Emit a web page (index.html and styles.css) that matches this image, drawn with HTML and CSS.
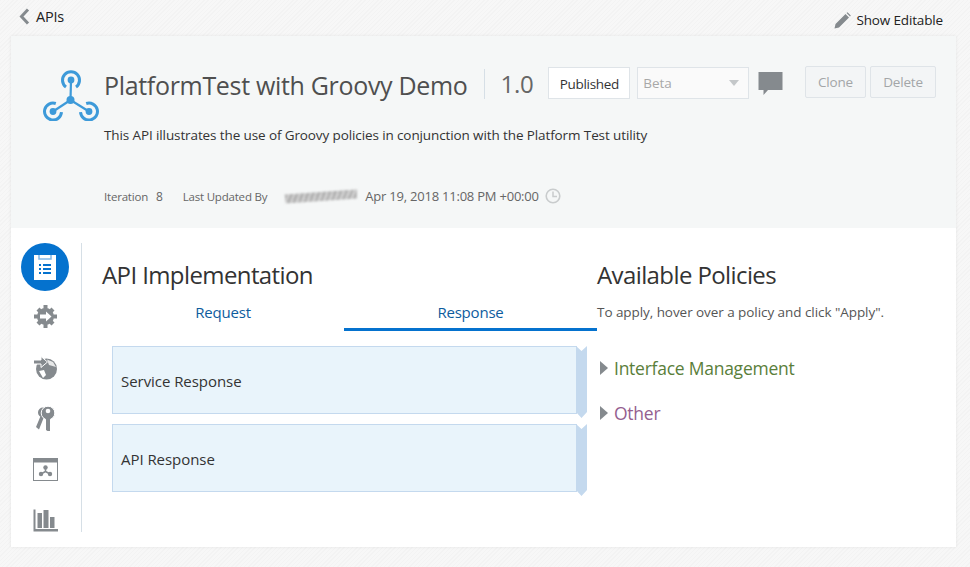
FILE: index.html
```html
<!DOCTYPE html>
<html>
<head>
  <title>PlatformTest with Groovy Demo</title>
  <meta name="viewport" content="width=device-width, initial-scale=1">
  <link rel="stylesheet" href="styles.css">
</head>
<body>
  <div class="topbar">
    <a class="back">
      <svg class="back-icon" width="11" height="17" viewBox="0 0 11 17"><path d="M9 1.500 L2.500 8.500 L9 15.500" fill="none" stroke="#858a8e" stroke-width="3"/></svg>
      APIs
    </a>
    <a class="editable">
      <svg width="17" height="17" viewBox="0 0 17 17"><path d="M0.500 16.500 L1.500 12 L11.500 2 L15 5.500 L5 15.500 Z M12.500 1 L13.500 0.200 L16.800 3.500 L16 4.500 Z" fill="#858a8e"/></svg>
      Show Editable
    </a>
  </div>

  <div class="card">
    <div class="header">
      <div class="title-row">
        <svg class="api-logo" width="58" height="52" viewBox="0 0 58 52">
          <g fill="none" stroke="#3d9ad9" stroke-width="3">
            <path d="M24 18 A8.500 8.500 0 1 1 34 18"/>
            <path d="M13.800 34.500 A8.500 8.500 0 1 0 19.500 43.200"/>
            <path d="M44.200 34.500 A8.500 8.500 0 1 1 38.500 43.200"/>
          </g>
          <g stroke="#3d9ad9" stroke-width="2.200">
            <line x1="29" y1="11" x2="28.500" y2="31"/>
            <line x1="28.500" y1="31" x2="11" y2="42.500"/>
            <line x1="28.500" y1="31" x2="47" y2="42.500"/>
          </g>
          <g fill="#3d9ad9">
            <circle cx="29" cy="11" r="3.400"/>
            <circle cx="28.500" cy="31" r="4"/>
            <circle cx="11" cy="42.500" r="3.400"/>
            <circle cx="47" cy="42.500" r="3.400"/>
          </g>
        </svg>
        <h1 class="api-name">PlatformTest with Groovy Demo</h1>
        <span class="version">1.0</span>
        <span class="state">Published</span>
        <span class="select">Beta<i class="caret"></i></span>
        <svg class="comment" width="25" height="25" viewBox="0 0 25 25"><path d="M0.500 1 H24.500 V19 H10 L5.500 24 V19 H0.500 Z" fill="#858a8e"/></svg>
        <div class="actions">
          <button>Clone</button>
          <button>Delete</button>
        </div>
      </div>
      <p class="description">This API illustrates the use of Groovy policies in conjunction with the Platform Test utility</p>
      <div class="meta">
        <span>Iteration</span>
        <span class="iter">8</span>
        <span class="updated">Last Updated By</span>
        <span class="redacted"></span>
        <span class="date">Apr 19, 2018 11:08 PM +00:00</span>
        <svg width="16" height="16" viewBox="0 0 16 16"><circle cx="8" cy="8" r="6.800" fill="none" stroke="#c9cccd" stroke-width="1.600"/><path d="M8 3.500 V8.500 H12" fill="none" stroke="#c9cccd" stroke-width="1.500"/></svg>
      </div>
    </div>

    <div class="content">
      <nav class="sidenav">
        <a class="nav-item active">
          <svg width="24" height="28" viewBox="0 0 24 28"><path d="M1 2 H23 V27 H1 Z" fill="#fff"/><path d="M6 2 V6 H18 V2" fill="none" stroke="#0572ce" stroke-width="1.500" opacity=".5"/><g fill="#0572ce"><rect x="6" y="11" width="2" height="2"/><rect x="10" y="11" width="8" height="2"/><rect x="6" y="15" width="2" height="2"/><rect x="10" y="15" width="8" height="2"/><rect x="6" y="19" width="2" height="2"/><rect x="10" y="19" width="8" height="2"/></g></svg>
        </a>
        <a class="nav-item">
          <svg width="25" height="25" viewBox="0 0 25 25"><circle cx="12.500" cy="12.500" r="8.500" fill="#858a8e"/><path d="M10.500 1 H14.500 V5 H10.500 Z M10.500 20 H14.500 V24 H10.500 Z M1 10.500 H5 V14.500 H1 Z M20 10.500 H24 V14.500 H20 Z M3.500 6.500 L6.500 3.500 L9 6 L6 9 Z M18.500 3.500 L21.500 6.500 L19 9 L16 6 Z M3.500 18.500 L6 16 L9 19 L6.500 21.500 Z M19 16 L21.500 18.500 L18.500 21.500 L16 19 Z" fill="#858a8e"/><path d="M7 10.500 H13 V7.500 L18.500 12.500 L13 17.500 V14.500 H7 Z" fill="#fff"/></svg>
        </a>
        <a class="nav-item">
          <svg width="25" height="25" viewBox="0 0 25 25"><circle cx="13.500" cy="14" r="10.500" fill="#858a8e"/><path d="M14 4.500 L20 7 L23 12 L16 10 Z" fill="#fff" opacity=".8"/><path d="M6 16 L11 15 L13 20 L10 23 Z" fill="#fff"/><path d="M0.500 5 H8 V1.500 L14.500 7 L8 12.500 V9 H0.500 Z" fill="#858a8e" stroke="#fff" stroke-width="1"/></svg>
        </a>
        <a class="nav-item">
          <svg width="22" height="26" viewBox="0 0 22 26"><circle cx="9" cy="6.500" r="5" fill="#858a8e"/><path d="M7 9 L2 21 L5 23.500 L10 11 Z" fill="#858a8e"/><circle cx="14" cy="7" r="6.800" fill="#858a8e" stroke="#fff" stroke-width="1"/><circle cx="14" cy="5" r="2.300" fill="#fff"/><path d="M12 13 H16 V25 H13.500 L12 24 Z" fill="#858a8e"/></svg>
        </a>
        <a class="nav-item">
          <svg width="25" height="23" viewBox="0 0 25 23"><rect x="0.500" y="0.500" width="24" height="22" fill="#fff" stroke="#858a8e"/><rect x="0.500" y="0.500" width="24" height="4" fill="#858a8e"/><g fill="#858a8e"><circle cx="12.500" cy="9.500" r="2.200"/><circle cx="8" cy="16" r="2.200"/><circle cx="17" cy="16" r="2.200"/></g><path d="M12.500 9.500 V13.500 L8 16 M12.500 13.500 L17 16" fill="none" stroke="#858a8e" stroke-width="1.500"/></svg>
        </a>
        <a class="nav-item">
          <svg width="25" height="23" viewBox="0 0 25 23"><path d="M0.500 0.500 H2.500 V20 H25 V22.500 H0.500 Z" fill="#858a8e"/><g fill="#858a8e"><rect x="4.500" y="4" width="4.500" height="15"/><rect x="10.500" y="1" width="5" height="18"/><rect x="17" y="8" width="4.500" height="11"/></g></svg>
        </a>
      </nav>

      <section class="implementation">
        <h2>API Implementation</h2>
        <div class="tabs">
          <a class="tab">Request</a>
          <a class="tab selected">Response</a>
        </div>
        <div class="flow">
          <div class="flow-box">Service Response</div>
          <div class="flow-box">API Response</div>
        </div>
      </section>

      <section class="policies">
        <h2>Available Policies</h2>
        <p class="hint">To apply, hover over a policy and click "Apply".</p>
        <div class="group green"><i class="arrow"></i>Interface Management</div>
        <div class="group purple"><i class="arrow"></i>Other</div>
      </section>
    </div>
  </div>
</body>
</html>
```

FILE: styles.css
```css
* {
  box-sizing: border-box;
}
body {
  margin: 0;
  height: 567px;
  overflow: hidden;
  padding: 0 14px 0 11px;
  font-family: "Open Sans", "Noto Sans", sans-serif;
  color: #333;
  background-color: #f5f5f5;
  background-image: repeating-linear-gradient(135deg, #f3f3f3 0, #f3f3f3 1px, #f7f7f7 1px, #f7f7f7 3px);
}
h1, h2, p {
  margin: 0;
  font-weight: normal;
}

/* top links */
.topbar {
  height: 36px;
  display: flex;
  justify-content: space-between;
}
.back {
  display: flex;
  align-items: center;
  gap: 6px;
  height: 33px;
  margin-left: 8px;
  font-size: 14.500px;
  letter-spacing: -0.200px;
  color: #222;
}
.editable {
  display: flex;
  align-items: center;
  gap: 5px;
  height: 40px;
  margin-right: 13px;
  font-size: 13.500px;
  letter-spacing: -0.150px;
  color: #222;
}

.card {
  height: 511px;
  background: #fff;
  box-shadow: 0 0 3px rgba(0, 0, 0, .08);
}

/* header */
.header {
  height: 192px;
  background: #f5f7f7;
  padding: 30px 20px 0 31px;
}
.title-row {
  display: flex;
  align-items: flex-start;
  height: 52px;
}
.api-logo {
  margin-top: 3px;
  margin-right: 4px;
  flex: none;
}
.api-name {
  font-size: 25px;
  line-height: 36px;
  letter-spacing: -0.320px;
  color: #4f4f4f;
  padding-right: 16px;
  margin-top: 1px;
  white-space: nowrap;
}
.version {
  border-left: 1px solid #d6dfe6;
  height: 30px;
  margin-top: 3px;
  padding-left: 16px;
  font-size: 24px;
  line-height: 30px;
  letter-spacing: -0.300px;
  color: #666;
}
.state {
  margin-left: 15px;
  margin-top: 1px;
  width: 82px;
  height: 32px;
  border: 1px solid #dfe4e8;
  background: #fff;
  font-size: 13.500px;
  letter-spacing: -0.300px;
  line-height: 32px;
  text-align: center;
  color: #333;
}
.select {
  margin-left: 7px;
  margin-top: 1px;
  width: 112px;
  height: 32px;
  padding-left: 5px;
  border: 1px solid #dfe4e8;
  background: #fafafa;
  font-size: 13.500px;
  line-height: 30px;
  color: #a8a8a8;
  display: flex;
  justify-content: space-between;
  align-items: center;
  padding-right: 9px;
}
.caret {
  width: 0;
  height: 0;
  border-left: 5px solid transparent;
  border-right: 5px solid transparent;
  border-top: 6px solid #c4c7c9;
}
.comment {
  margin-left: 9px;
  margin-top: 5px;
  flex: none;
}
.actions {
  margin-left: 22px;
  display: flex;
  gap: 4px;
}
.actions button {
  height: 32px;
  padding: 0;
  width: 61px;
  border: 1px solid #dfe4e8;
  border-radius: 2px;
  background: #f3f5f6;
  font-family: inherit;
  font-size: 13.500px;
  letter-spacing: -0.200px;
  color: #a3a6a8;
}
.actions button:last-child {
  width: 66px;
}
.description {
  margin-left: 62px;
  margin-top: 7px;
  font-size: 13.500px;
  line-height: 20px;
  letter-spacing: -0.110px;
  color: #333;
}
.meta {
  margin-left: 62px;
  margin-top: 41px;
  display: flex;
  align-items: center;
  height: 20px;
  font-size: 11.500px;
  letter-spacing: -0.200px;
  color: #666;
}
.iter {
  margin-left: 8px;
  font-size: 12px;
}
.updated {
  margin-left: 20px;
}
.redacted {
  width: 72px;
  height: 9px;
  margin-left: 18px;
  background: repeating-linear-gradient(115deg, #a0a0a0 0, #c4c4c4 3px, #e6e6e6 5px);
  filter: blur(1.200px);
  transform: rotate(-4deg);
}
.date {
  margin-left: 8px;
  font-size: 13px;
  letter-spacing: -0.220px;
  margin-right: 6px;
}

/* body */
.content {
  display: flex;
  height: 319px;
  padding-top: 15px;
}
.sidenav {
  flex: none;
  width: 71px;
  height: 289px;
  border-right: 1px solid #d6dfe6;
  display: flex;
  flex-direction: column;
  align-items: center;
  padding-right: 2px;
}
.nav-item {
  flex: none;
  width: 48px;
  height: 51px;
  display: flex;
  align-items: center;
  justify-content: center;
}
.nav-item.active {
  height: 48px;
  background: #0572ce;
  border-radius: 50%;
}
.implementation {
  width: 495px;
  margin-left: 20px;
  padding-top: 17px;
  flex: none;
}
.implementation h2, .policies h2 {
  font-size: 24px;
  line-height: 30px;
  letter-spacing: -0.600px;
  color: #333;
}
.tabs {
  display: flex;
  margin-top: 11px;
}
.tab {
  width: 242px;
  height: 30px;
  text-align: center;
  font-size: 15px;
  line-height: 22px;
  letter-spacing: -0.200px;
  color: #0e5c9e;
}
.tab.selected {
  width: 253px;
  border-bottom: 3px solid #0572ce;
}
.flow {
  margin-left: 10px;
  margin-top: 15px;
  display: flex;
  flex-direction: column;
  gap: 10px;
}
.flow-box {
  position: relative;
  width: 465px;
  height: 68px;
  padding-left: 8px;
  border: 1px solid #c4d9ee;
  background: #e9f4fb;
  font-size: 15px;
  letter-spacing: -0.050px;
  line-height: 68px;
  color: #333;
}
/* folded ribbon at the right end of each box */
.flow-box::after {
  content: "";
  position: absolute;
  top: -1px;
  left: 463px;
  width: 11px;
  height: 72px;
  background: #c4d9ee;
  clip-path: polygon(0 0, 50% 5px, 100% 0, 100% 66px, 50% 72px, 0 66px);
}
.policies {
  padding-top: 17px;
}
.hint {
  margin-top: 12px;
  font-size: 13.500px;
  line-height: 20px;
  letter-spacing: -0.060px;
  color: #555;
  margin-bottom: 31px;
}
.group {
  display: flex;
  align-items: center;
  height: 30px;
  margin-bottom: 15px;
  font-size: 17.500px;
  letter-spacing: -0.250px;
}
.arrow {
  width: 0;
  height: 0;
  margin-left: 3px;
  margin-right: 6px;
  border-top: 7px solid transparent;
  border-bottom: 7px solid transparent;
  border-left: 8px solid #858a8e;
}
.green {
  color: #5a7e3a;
}
.purple {
  color: #94608f;
}
```
